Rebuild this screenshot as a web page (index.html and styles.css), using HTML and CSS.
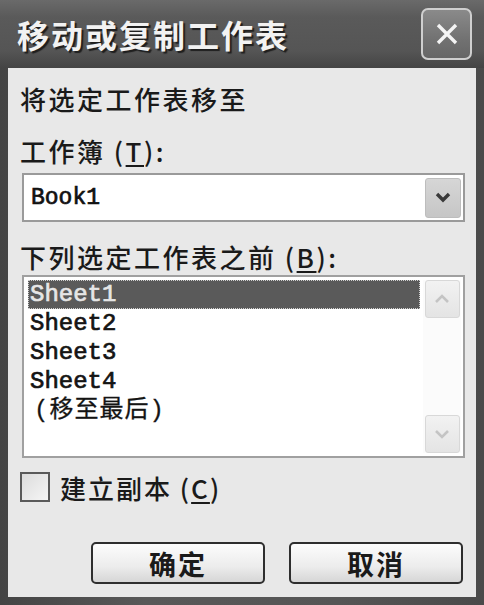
FILE: index.html
```html
<!DOCTYPE html>
<html lang="zh-CN">
<head>
    <meta charset="UTF-8">
    <meta name="viewport" content="width=device-width, initial-scale=1.0">
    <title>移动或复制工作表</title>
    <link rel="stylesheet" href="styles.css">
</head>
<body>

<div class="dialog">
    <div class="titlebar">
        <span class="title">移动或复制工作表</span>
        <button class="close-btn" type="button" aria-label="关闭">
            <svg width="24" height="24" viewBox="0 0 24 24">
                <path d="M3 3 L21 21 M21 3 L3 21" stroke="#f4f4f4" stroke-width="3.4" fill="none"/>
            </svg>
        </button>
    </div>

    <div class="client">
        <div class="label">将选定工作表移至</div>
        <div class="label label-gap">工作簿 (<u>T</u>):</div>

        <div class="combo">
            <span class="combo-value">Book1</span>
            <span class="combo-btn">
                <svg width="16" height="12" viewBox="0 0 16 12">
                    <path d="M2 2 L8 8 L14 2" stroke="#3a3a3a" stroke-width="3.4" fill="none"/>
                </svg>
            </span>
        </div>

        <div class="label label-gap">下列选定工作表之前 (<u>B</u>):</div>

        <div class="listbox">
            <ul class="items">
                <li class="item selected">Sheet1</li>
                <li class="item">Sheet2</li>
                <li class="item">Sheet3</li>
                <li class="item">Sheet4</li>
                <li class="item last">(移至最后)</li>
            </ul>
            <div class="scrollbar">
                <span class="scroll-btn">
                    <svg width="16" height="10" viewBox="0 0 16 10">
                        <path d="M2 8 L8 2 L14 8" stroke="#c4c4c4" stroke-width="2.6" fill="none"/>
                    </svg>
                </span>
                <span class="scroll-btn">
                    <svg width="16" height="10" viewBox="0 0 16 10">
                        <path d="M2 2 L8 8 L14 2" stroke="#c4c4c4" stroke-width="2.6" fill="none"/>
                    </svg>
                </span>
            </div>
        </div>

        <label class="check-row">
            <span class="checkbox"></span>
            <span class="check-text">建立副本 (<u>C</u>)</span>
        </label>

        <div class="buttons">
            <button class="btn" type="button">确定</button>
            <button class="btn" type="button">取消</button>
        </div>
    </div>
</div>

</body>
</html>
```

FILE: styles.css
```css
html {
    font-size: 16px;
}

body {
    margin: 0;
    background-color: #3c3c3c;
    font-family: "Noto Sans CJK SC", "Noto Sans", sans-serif;
    color: #1a1a1a;
}

.dialog {
    width: 484px;
    height: 605px;
    box-sizing: border-box;
    padding: 0 8px 8px 8px;
    display: flex;
    flex-direction: column;
    background: linear-gradient(to right, #444 0%, #585858 30%, #555 70%, #4a4a4a 100%);
}

.titlebar {
    height: 68px;
    flex-shrink: 0;
    display: flex;
    align-items: center;
    justify-content: space-between;
    padding-left: 8px;
    background: linear-gradient(to bottom, #6a6a6a 0%, #5a5a5a 25%, #555 75%, #444 100%);
    margin: 0 -8px;
    padding-right: 12px;
}

.title {
    font-size: 32px;
    font-weight: 700;
    letter-spacing: 2px;
    color: #f2f2f2;
    text-shadow: 2px 2px 1px #1e1e1e;
    padding-left: 9px;
}

.close-btn {
    width: 51px;
    height: 52px;
    box-sizing: border-box;
    border: 2px solid #cfcfcf;
    border-radius: 7px;
    background: linear-gradient(to bottom, #8a8a8a, #727272 60%, #666);
    display: flex;
    align-items: center;
    justify-content: center;
    padding: 0;
}

.client {
    flex: 1;
    background-color: #e8e8e8;
    padding: 14px 11px 0 14px;
    display: flex;
    flex-direction: column;
}

.label {
    height: 34px;
    line-height: 34px;
    font-size: 26px;
    font-weight: 500;
    letter-spacing: 2.5px;
    margin-left: -2px;
    white-space: nowrap;
}

.label u,
.check-text u {
    text-underline-offset: 3px;
}

.label-gap {
    margin-top: 18px;
}

.combo {
    margin-top: 5px;
    height: 49px;
    box-sizing: border-box;
    border: 2px solid #9a9a9a;
    background-color: #fff;
    display: flex;
    align-items: center;
    justify-content: space-between;
    padding: 0 2px 0 7px;
}

.combo-value {
    font-family: "Liberation Mono", monospace;
    font-size: 23px;
    color: #111;
    -webkit-text-stroke: 0.7px #111;
}

.combo-btn {
    width: 36px;
    height: 40px;
    border-radius: 3px;
    background: linear-gradient(to bottom, #d6d6d6, #c6c6c6);
    border: 1px solid #bdbdbd;
    box-sizing: border-box;
    display: flex;
    align-items: center;
    justify-content: center;
}

.listbox {
    margin-top: 1px;
    height: 183px;
    box-sizing: border-box;
    border: 2px solid #a0a0a0;
    background-color: #fff;
    padding: 3px 2px 3px 4px;
    display: flex;
}

.items {
    list-style: none;
    margin: 0;
    padding: 0;
    flex: 1;
}

.item {
    height: 29px;
    line-height: 29px;
    padding-left: 2px;
    font-family: "Liberation Mono", "Noto Sans CJK SC", monospace;
    font-size: 24px;
    color: #141414;
    -webkit-text-stroke: 0.7px #141414;
    white-space: nowrap;
}

.item.selected {
    background-color: #5a5a5a;
    color: #e6e6e6;
    -webkit-text-stroke: 0.7px #e6e6e6;
    outline: 1px dotted #cfcfcf;
    outline-offset: -1px;
}

.item.last {
    padding-left: 6px;
    letter-spacing: 1px;
    -webkit-text-stroke: 0.3px #141414;
}

.scrollbar {
    width: 38px;
    margin-left: 3px;
    display: flex;
    flex-direction: column;
    justify-content: space-between;
    align-items: center;
    background-color: #fbfbfb;
}

.scroll-btn {
    width: 35px;
    height: 38px;
    box-sizing: border-box;
    border: 1px solid #d8d8d8;
    border-radius: 3px;
    background: linear-gradient(to bottom, #f2f2f2, #e4e4e4);
    display: flex;
    align-items: center;
    justify-content: center;
}

.check-row {
    margin-top: 14px;
    height: 30px;
    display: flex;
    align-items: center;
    gap: 10px;
    margin-left: -2px;
}

.checkbox {
    width: 30px;
    height: 30px;
    box-sizing: border-box;
    border: 2px solid #5a5a5a;
    background: linear-gradient(135deg, #dcdcdc, #f6f6f6);
}

.check-text {
    font-size: 26px;
    font-weight: 500;
    letter-spacing: 2px;
    white-space: nowrap;
}

.buttons {
    margin-top: 40px;
    display: flex;
    justify-content: flex-end;
    gap: 24px;
    margin-right: 2px;
}

.btn {
    width: 174px;
    height: 42px;
    box-sizing: border-box;
    border: 2px solid #2e2e2e;
    border-radius: 5px;
    background: linear-gradient(to bottom, #fcfcfc, #ececec 60%, #d6d6d6);
    font-family: "Noto Sans CJK SC", sans-serif;
    font-size: 27px;
    font-weight: 700;
    color: #1a1a1a;
    letter-spacing: 2px;
    padding: 0;
    line-height: 1;
}
```
